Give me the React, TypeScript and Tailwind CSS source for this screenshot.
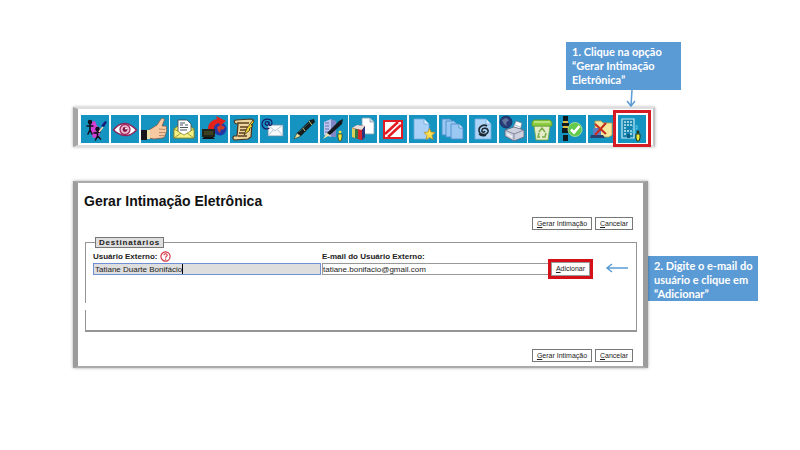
import React from 'react';

const tools: { label: string; art: React.ReactNode }[] = [
  {
    label: 'Atribuir processo',
    art: (
      <>
        <path d="M10 7l4-1 2 5 4 3-2 8-6 1-2-6z" fill="#d43fd2" />
        <g fill="#120f1c" stroke="#120f1c" strokeWidth="1.6" strokeLinecap="round">
          <circle cx="9" cy="7" r="1.5" />
          <path d="M9 9v6M6 11h6M9 15l-2 4M9 15l2 4" />
          <circle cx="16.5" cy="14" r="1.5" />
          <path d="M16.5 16v5M13 18l6-1M16.5 21l-2 4M16.5 21l3 3" />
        </g>
        <path d="M18 17l4-5" stroke="#e9d9a0" strokeWidth="1.4" />
        <path d="M20 11l4-5 2 1-3 5z" fill="#1a1d7a" />
      </>
    ),
  },
  {
    label: 'Acompanhamento especial',
    art: (
      <>
        <path d="M2.500 15Q8 8 14 8.500T25.500 15Q20 21 14 20.500T2.500 15z" fill="#fff" stroke="#8f2458" strokeWidth="1.400" />
        <circle cx="14" cy="14.500" r="5" fill="#f0b8cf" stroke="#a12760" strokeWidth="1.300" />
        <circle cx="14" cy="14.500" r="2.400" fill="#7b1645" />
        <circle cx="15" cy="13.500" r="1" fill="#fff" />
      </>
    ),
  },
  {
    label: 'Ciência',
    art: (
      <>
        <path d="M8 15l8-5 4-6c2-2 4 0 3 2l-2 5h3c2 0 2 2 1 3 1 1 1 2 0 3 0 1 0 2-1 3 0 2-1 3-3 3l-8 1-5-1z" fill="#f6c9a2" stroke="#875b45" strokeWidth=".8" />
        <path d="M18 14l6 .500M18 17.500l6 .200M18 20.500l5 .200" stroke="#a9765a" strokeWidth=".8" />
        <path d="M0 15h6v10H0z" fill="#17171b" />
        <path d="M6 15h3v9H6z" fill="#eee2a8" />
      </>
    ),
  },
  {
    label: 'Enviar processo',
    art: (
      <>
        <path d="M4 14l10-8 10 8v9H4z" fill="#e8e85d" stroke="#77782c" strokeWidth=".8" />
        <path d="M8 5h9l4 4v12H8z" fill="#fff" stroke="#444" strokeWidth=".8" />
        <path d="M10 8h5M10 10h3M15 10h3M10 12.500h8M10 15h7" stroke="#4a5660" strokeWidth="1.200" />
        <path d="M4 14l10 6 10-6v9H4z" fill="#f3f284" stroke="#89892e" strokeWidth=".8" />
        <path d="M4 23l7-5M24 23l-7-5" stroke="#89892e" strokeWidth=".8" />
      </>
    ),
  },
  {
    label: 'Atualizar andamento',
    art: (
      <>
        <circle cx="20" cy="14" r="6.500" fill="#2438a8" />
        <path d="M17 12l4-2 4 2-2 3-2-1-1 4-2-2z" fill="#ce3d28" />
        <path d="M2 14h13v8H2z" fill="#22251c" />
        <path d="M4 16h9v4H4z" fill="#3c421f" />
        <path d="M4 22h9l2 2H2z" fill="#111" />
        <path d="M8 14c0-6 4-9 9-10l-1-3 10 5-6 5-1-3c-4 1-5 3-5 6z" fill="#e32118" />
      </>
    ),
  },
  {
    label: 'Atribuir documento',
    art: (
      <>
        <path d="M6 5l15-1c3 0 3 3 1 4l-1 14-3 2-13 1c-2 0-3-3-1-4h3L8 9C4 9 3 6 6 5z" fill="#ead59c" stroke="#4c321a" strokeWidth="1.200" />
        <path d="M7 8h12M10 12h8M10 15h7M9 18h7M8 21h9" stroke="#5e3c1d" strokeWidth="1.300" />
        <path d="M14 20l3-7 6-8 1 2-3 3 2 1-4 3 1 1z" fill="#f2d735" stroke="#3e301a" strokeWidth=".8" />
      </>
    ),
  },
  {
    label: 'Enviar correspondência eletrônica',
    art: (
      <>
        <path d="M8 10h15v11H8z" fill="#f8f9fb" stroke="#6586a5" strokeWidth=".8" />
        <path d="M8 10l7 6 8-6M8 21l5-6M23 21l-5-6" fill="none" stroke="#a7bccb" strokeWidth=".8" />
        <circle cx="7" cy="8.500" r="1.800" fill="none" stroke="#19206b" strokeWidth="1.300" />
        <path d="M9 6.500v3c0 1.500 3 1.200 3-1.500 0-5-9-5.500-10 .500 0 5 4 6.500 7.500 4.500" fill="none" stroke="#19206b" strokeWidth="1.200" />
      </>
    ),
  },
  {
    label: 'Assinar',
    art: (
      <>
        <path d="M4 24l3-6 4 3z" fill="#e9dfa0" stroke="#31341d" strokeWidth=".6" />
        <path d="M7 18L20 5l4-1 1 3-14 14z" fill="#151d1e" />
        <path d="M13 13l2 3M19 6l3 4" stroke="#d1c970" strokeWidth="1" />
        <path d="M9 17L20 7" stroke="#577172" strokeWidth=".7" />
      </>
    ),
  },
  {
    label: 'Gerenciar assinaturas externas',
    art: (
      <>
        <path d="M4 7l7-3v18l-7-2z" fill="#bfc6ed" />
        <path d="M11 4l5 2v16h-5z" fill="#7f88c6" />
        <path d="M5 8h4M5 11h4M5 14h4M5 17h4" stroke="#6671b1" strokeWidth="1.200" />
        <path d="M3 24l4-6 3 2z" fill="#eee0a0" />
        <path d="M7 18L19 6l4-2-1 5-12 11z" fill="#151a20" />
        <circle cx="20" cy="17" r="1.500" fill="#e9e436" />
        <path d="M18 19h4v3l-1 4h-2l-1-4z" fill="#f1eb38" stroke="#353719" strokeWidth=".7" />
      </>
    ),
  },
  {
    label: 'Gerar arquivo PDF',
    art: (
      <>
        <path d="M13 3h8l4 4v12H13z" fill="#fff" stroke="#819eaf" strokeWidth=".8" />
        <path d="M21 3v4h4" fill="#d5dde3" stroke="#819eaf" strokeWidth=".8" />
        <path d="M3 13l5-3 8 1v11l-3 3-10-3z" fill="#9c2129" />
        <path d="M3 13l3 1v9l-3-1z" fill="#d9d25a" />
        <path d="M6 14l3 .500V24l-3-1z" fill="#347a46" />
        <path d="M9 14.500l4 .500v10l-4-1z" fill="#d3262d" />
        <path d="M3 13l5-3 8 1-3 4z" fill="#e7ded8" />
        <path d="M13 15l3-4v11l-3 3z" fill="#2d347c" />
      </>
    ),
  },
  {
    label: 'Anular processo',
    art: (
      <>
        <path d="M5 6h18v17H5z" fill="#fff" stroke="#e31b22" strokeWidth="2" />
        <path d="M6 19L19 7M9 22L22 10" stroke="#e31b22" strokeWidth="2.400" />
      </>
    ),
  },
  {
    label: 'Incluir em favoritos',
    art: (
      <>
        <path d="M5 4h10l5 5v15H5z" fill="#a9d0f6" stroke="#6fa8dc" strokeWidth=".8" />
        <path d="M15 4v5h5" fill="#e0f0ff" stroke="#6fa8dc" strokeWidth=".8" />
        <path d="M20.500 13.500l1.500 3.500 4 .500-3 3 1 4-3.500-2-3.500 2 1-4-3-3 4-.500z" fill="#f9df52" stroke="#b78f25" strokeWidth=".8" />
      </>
    ),
  },
  {
    label: 'Duplicar processo',
    art: (
      <g fill="#9ac8f2" stroke="#4c8ecc" strokeWidth=".9">
        <path d="M3 4h8l4 4v12H3z" />
        <path d="M7 6h8l4 4v12H7z" />
        <path d="M12 9h8l4 4v11H12z" />
        <path d="M20 9v4h4" fill="#dceeff" />
      </g>
    ),
  },
  {
    label: 'Relacionamentos do processo',
    art: (
      <>
        <path d="M6 4h11l5 5v15H6z" fill="#add4f7" stroke="#72aadd" strokeWidth=".8" />
        <path d="M17 4v5h5" fill="#e0f0ff" stroke="#72aadd" strokeWidth=".8" />
        <path d="M18 11c-3-2-8 0-8 4 0 5 7 6 9 2 1-4-5-5-6-2-1 2 2 3 3 1M10 19c2 2 5 2 7 1" fill="none" stroke="#1c2932" strokeWidth="1.600" />
      </>
    ),
  },
  {
    label: 'Imprimir na web',
    art: (
      <>
        <path d="M13 15l4-9 6 2-2 8z" fill="#fff" stroke="#737b8e" strokeWidth=".8" />
        <path d="M16 10l5 2M15 12l5 2" stroke="#93a2b7" strokeWidth=".8" />
        <path d="M6 15l9-3 10 3v7l-10 4-9-5z" fill="#cdd0dd" stroke="#5b617d" strokeWidth=".8" />
        <path d="M6 15l9 4 10-4M15 19v7" fill="none" stroke="#6d7490" strokeWidth=".8" />
        <path d="M8 18l5 3v2l-5-3z" fill="#f0f1f5" />
        <circle cx="7" cy="7" r="6" fill="#273c79" stroke="#152550" strokeWidth=".7" />
        <path d="M3 5l4-2 3 2-3 3 1 3-3-2z" fill="#64789f" />
      </>
    ),
  },
  {
    label: 'Excluir',
    art: (
      <>
        <path d="M6 11h16l-2 14H8z" fill="#e3edc9" stroke="#77a83d" strokeWidth=".8" />
        <path d="M4 7l2-2h16l2 2v4H4z" fill="#8dcc3f" stroke="#609a2f" strokeWidth=".8" />
        <path d="M6 7h16" stroke="#d0ec9e" strokeWidth="1.400" />
        <path d="M11 17l3-4 3 4M18 18l-1 4h-3M12 22h-2l1-4" fill="none" stroke="#7dab45" strokeWidth="1.500" />
      </>
    ),
  },
  {
    label: 'Concluir processo',
    art: (
      <>
        <path d="M5 1h5v5H5zM5 20h5v6H5zM4 8h7v3H4zM4 13h7v5H4z" fill="#10191c" />
        <path d="M5 6h5v2H5zM5 11h5v2H5z" fill="#d8ba45" />
        <circle cx="17" cy="14.500" r="7" fill="#62c94a" stroke="#b6e29f" strokeWidth=".8" />
        <path d="M13 14.500l3 3 5.500-6.500" fill="none" stroke="#fff" strokeWidth="2.600" />
      </>
    ),
  },
  {
    label: 'Remover arquivo',
    art: (
      <>
        <path d="M7 6h6l2 2h9v12l-3 2H7z" fill="#f6e99e" stroke="#b99a48" strokeWidth=".8" />
        <path d="M5 13h8v7H5z" fill="#5f7fc4" />
        <path d="M3 20h12l2 3H2z" fill="#27426f" />
        <path d="M7 9l11 10M18 8L7 20" stroke="#c42f22" strokeWidth="2.200" />
      </>
    ),
  },
  {
    label: 'Gerar Intimação Eletrônica',
    art: (
      <>
        <path d="M4 4h12v19H4z" fill="#1684af" stroke="#c5e9f4" strokeWidth="1.200" />
        <path d="M6 7h8M6 10h8M6 13h3M6 16h8M6 19h3M12 19h2" stroke="#c5e9f4" strokeWidth="1.500" strokeDasharray="2 1" />
        <path d="M9 23v-4h3v4" fill="#0b5e82" />
        <path d="M14 11h5v3h-5M12 17h6" fill="none" stroke="#55c4e5" strokeWidth="1.200" />
        <circle cx="20" cy="17" r="1.400" fill="#263415" />
        <path d="M18 19h4v4l-1 3h-2l-1-3z" fill="#ebe83d" stroke="#263415" strokeWidth="1" />
      </>
    ),
  },
];

function Toolbar() {
  return (
    <nav
      aria-label="Ações do processo"
      className="mr-[145px] ml-[73px] mt-[17px] flex h-10 items-start justify-between border-y-2 border-l-[5px] border-r-2 border-y-[#dedede] border-l-[#a6a6a6] border-r-[#c4c4c4] bg-white pt-1.5 pr-[7px] pl-[3px] shadow-[0_0_3px_rgba(0,0,0,0.3)]"
    >
      {tools.map((tool, i) => (
        <button key={tool.label} type="button" aria-label={tool.label} className="relative size-7 bg-[#1594c2]">
          <svg viewBox="0 0 28 28" className="size-7">
            {tool.art}
          </svg>
          {i === tools.length - 1 && (
            <span className="absolute -inset-x-[5px] -top-[5px] -bottom-1 border-3 border-[#d51c24]" />
          )}
        </button>
      ))}
    </nav>
  );
}

function FormButtons() {
  return (
    <div className="flex justify-end gap-[3px] pr-[10px] text-[7px] leading-[11px]">
      <button type="button" className="h-[13px] w-[60px] border border-[#777] bg-white">
        <u>G</u>erar Intimação
      </button>
      <button type="button" className="h-[13px] w-[38px] border border-[#777] bg-white">
        <u>C</u>ancelar
      </button>
    </div>
  );
}

function IntimacaoForm() {
  return (
    <form
      onSubmit={(e) => e.preventDefault()}
      className="relative min-w-0 flex-1 border-x-[5px] border-y-2 border-x-[#9c9c9c] border-y-[#ababab] bg-white pt-[9px] pb-1 shadow-[0_0_3px_rgba(0,0,0,0.35)]"
    >
      <h1 className="pl-1.5 text-[14px] leading-[18px] font-bold text-[#111]">Gerar Intimação Eletrônica</h1>
      <div className="mt-[7px]">
        <FormButtons />
      </div>

      <fieldset className="relative mt-[7px] mr-1.5 ml-[7px] h-[95px] border border-b-2 border-[#959595] pr-[46px] pl-[7px]">
        <legend className="ml-0.5 h-[11px] border border-[#777] bg-[#dedede] px-[3px] text-[8px] leading-[9px] font-bold tracking-widest text-[#222]">
          Destinatários
        </legend>
        {/* break in the left rule */}
        <span className="absolute top-[55px] -left-px h-[7px] w-px bg-white" />
        <div className="mt-0.5 flex items-end gap-px">
          <div className="min-w-0 flex-1">
            <div className="flex h-[13px] items-center gap-[3px]">
              <label htmlFor="usuario" className="text-[8px] font-bold">
                Usuário Externo:
              </label>
              <svg viewBox="0 0 12 12" className="size-[11px]" role="img" aria-label="Ajuda">
                <circle cx="6" cy="6" r="5" fill="#fff" stroke="#d12b3b" strokeWidth="1.200" />
                <path d="M4.300 4.700c0-2.300 3.500-2.200 3.500 0 0 1.200-1.700 1.200-1.700 2.700M6.100 8.300v1.200" fill="none" stroke="#d12b3b" strokeWidth="1.200" />
              </svg>
            </div>
            <div className="flex h-3 items-start border border-[#6f8fd6] bg-[#dedede]">
              <input
                id="usuario"
                type="text"
                defaultValue="Tatiane Duarte Bonifácio"
                className="block field-sizing-content h-[10px] border-r border-black pl-px text-[8px] leading-[11px] outline-none"
              />
            </div>
          </div>
          <div className="min-w-0 flex-1">
            <label htmlFor="email" className="block h-[13px] text-[8px] leading-[13px] font-bold">
              E-mail do Usuário Externo:
            </label>
            <input
              id="email"
              type="email"
              defaultValue="tatiane.bonifacio@gmail.com"
              className="block h-3 w-full border border-[#999] bg-white text-[8px] leading-[10px] outline-none"
            />
          </div>
          <button
            type="button"
            className="-mb-px h-[14px] w-[39px] border border-[#999] bg-white text-[7px] leading-3 outline-3 outline-[#d51018]"
          >
            <u>A</u>dicionar
          </button>
        </div>
      </fieldset>

      <div className="mt-[17px]">
        <FormButtons />
      </div>

      <svg viewBox="0 0 24 10" className="absolute top-[80px] right-[14px] h-[10px] w-6" fill="none" stroke="#5b9bd5" strokeWidth="1.500">
        <path d="M23 5H2M7 1L2 5l5 4" />
      </svg>
    </form>
  );
}

export default function App() {
  return (
    <main className="min-h-screen bg-white pt-[42px] font-['Liberation_Sans',Arial,sans-serif] text-[#222]">
      <div className="relative mr-[119px] ml-auto w-[115px] bg-[#5b9bd5] px-1.5 py-[3px] font-['Lato',sans-serif] text-[11px] leading-[14px] font-bold text-white">
        1. Clique na opção “Gerar Intimação Eletrônica”
        <svg viewBox="0 0 10 18" className="absolute top-full left-[60px] z-10 h-[18px] w-[10px]" fill="none" stroke="#5b9bd5" strokeWidth="1.500">
          <path d="M6 0L5 16M1 11l4 5 4-5" />
        </svg>
      </div>

      <Toolbar />

      <div className="mt-[34px] flex items-start pr-[42px] pl-[73px]">
        <IntimacaoForm />
        <div className="mt-[75px] w-[110px] bg-[#5b9bd5] pt-[3px] pl-1.5 font-['Lato',sans-serif] text-[11px] leading-[14px] font-bold text-white">
          2. Digite o e-mail do usuário e clique em “Adicionar”
        </div>
      </div>
    </main>
  );
}
